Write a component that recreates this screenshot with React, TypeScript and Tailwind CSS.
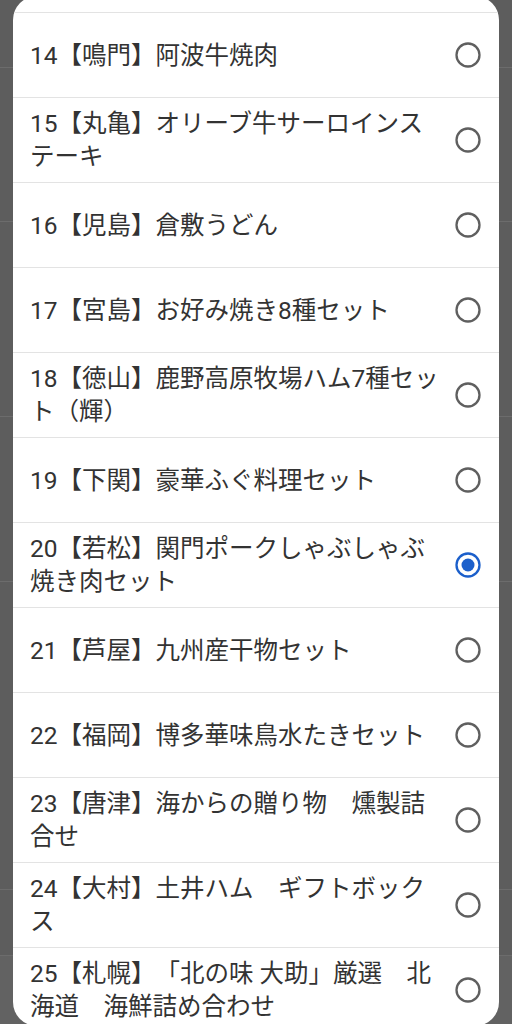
import React, { useState } from 'react';

const items = [
    '14【鳴門】阿波牛焼肉',
    '15【丸亀】オリーブ牛サーロインステーキ',
    '16【児島】倉敷うどん',
    '17【宮島】お好み焼き8種セット',
    '18【徳山】鹿野高原牧場ハム7種セット（輝）',
    '19【下関】豪華ふぐ料理セット',
    '20【若松】関門ポークしゃぶしゃぶ焼き肉セット',
    '21【芦屋】九州産干物セット',
    '22【福岡】博多華味鳥水たきセット',
    '23【唐津】海からの贈り物　燻製詰合せ',
    '24【大村】土井ハム　ギフトボックス',
    '25【札幌】「北の味 大助」厳選　北海道　海鮮詰め合わせ',
];

// 背景（暗くなったページ）
const Backdrop: React.FC = () => (
    <div className="flex flex-col h-[1024px] bg-[#5d5d5d]">
        <div className="h-[68px] border-b border-[#6c6c6c]" />
        <div className="h-[154px] border-b border-[#6c6c6c]" />
        <div className="h-[195px] border-b border-[#6c6c6c]" />
        <div className="h-[165px] border-b border-[#6c6c6c]" />
        <div className="h-[308px] border-b border-[#6c6c6c]" />
        <div className="h-[66px] border-b border-[#6c6c6c]" />
        <div className="flex-1 bg-[#626262]" />
    </div>
);

const Radio: React.FC<{ checked: boolean }> = ({ checked }) => (
    <svg width="26" height="26" viewBox="0 0 26 26" className="shrink-0">
        <circle
            cx="13"
            cy="13"
            r="11.5"
            fill="none"
            stroke={checked ? '#1b5fcb' : '#5f5f5f'}
            strokeWidth="2.3"
        />
        {checked && <circle cx="13" cy="13" r="6.5" fill="#1b5fcb" />}
    </svg>
);

const App: React.FC = () => {
    const [selected, setSelected] = useState(6);

    return (
        <div
            className="relative w-[512px] h-[1024px] overflow-hidden"
            style={{ fontFamily: 'Roboto, "Noto Sans CJK JP", sans-serif' }}
        >
            <Backdrop />

            {/* 選択ダイアログ */}
            <div className="absolute left-[13px] right-[13px] top-[-4px] h-[1030px] bg-white rounded-[24px] overflow-hidden">
                <div className="h-[17px] border-b border-[#e3e3e3]" />
                {items.map((label, i) => (
                    <button
                        key={label}
                        onClick={() => setSelected(i)}
                        className="flex w-full items-center min-h-[85px] pl-[17px] pr-[18px] border-b border-[#e3e3e3] text-left"
                    >
                        <span className="flex-1 pr-[11px] text-[24.5px] leading-[33px] font-normal text-[#333333] [text-spacing-trim:space-all]">
                            {label}
                        </span>
                        <Radio checked={selected === i} />
                    </button>
                ))}
            </div>
        </div>
    );
};

export default App;
